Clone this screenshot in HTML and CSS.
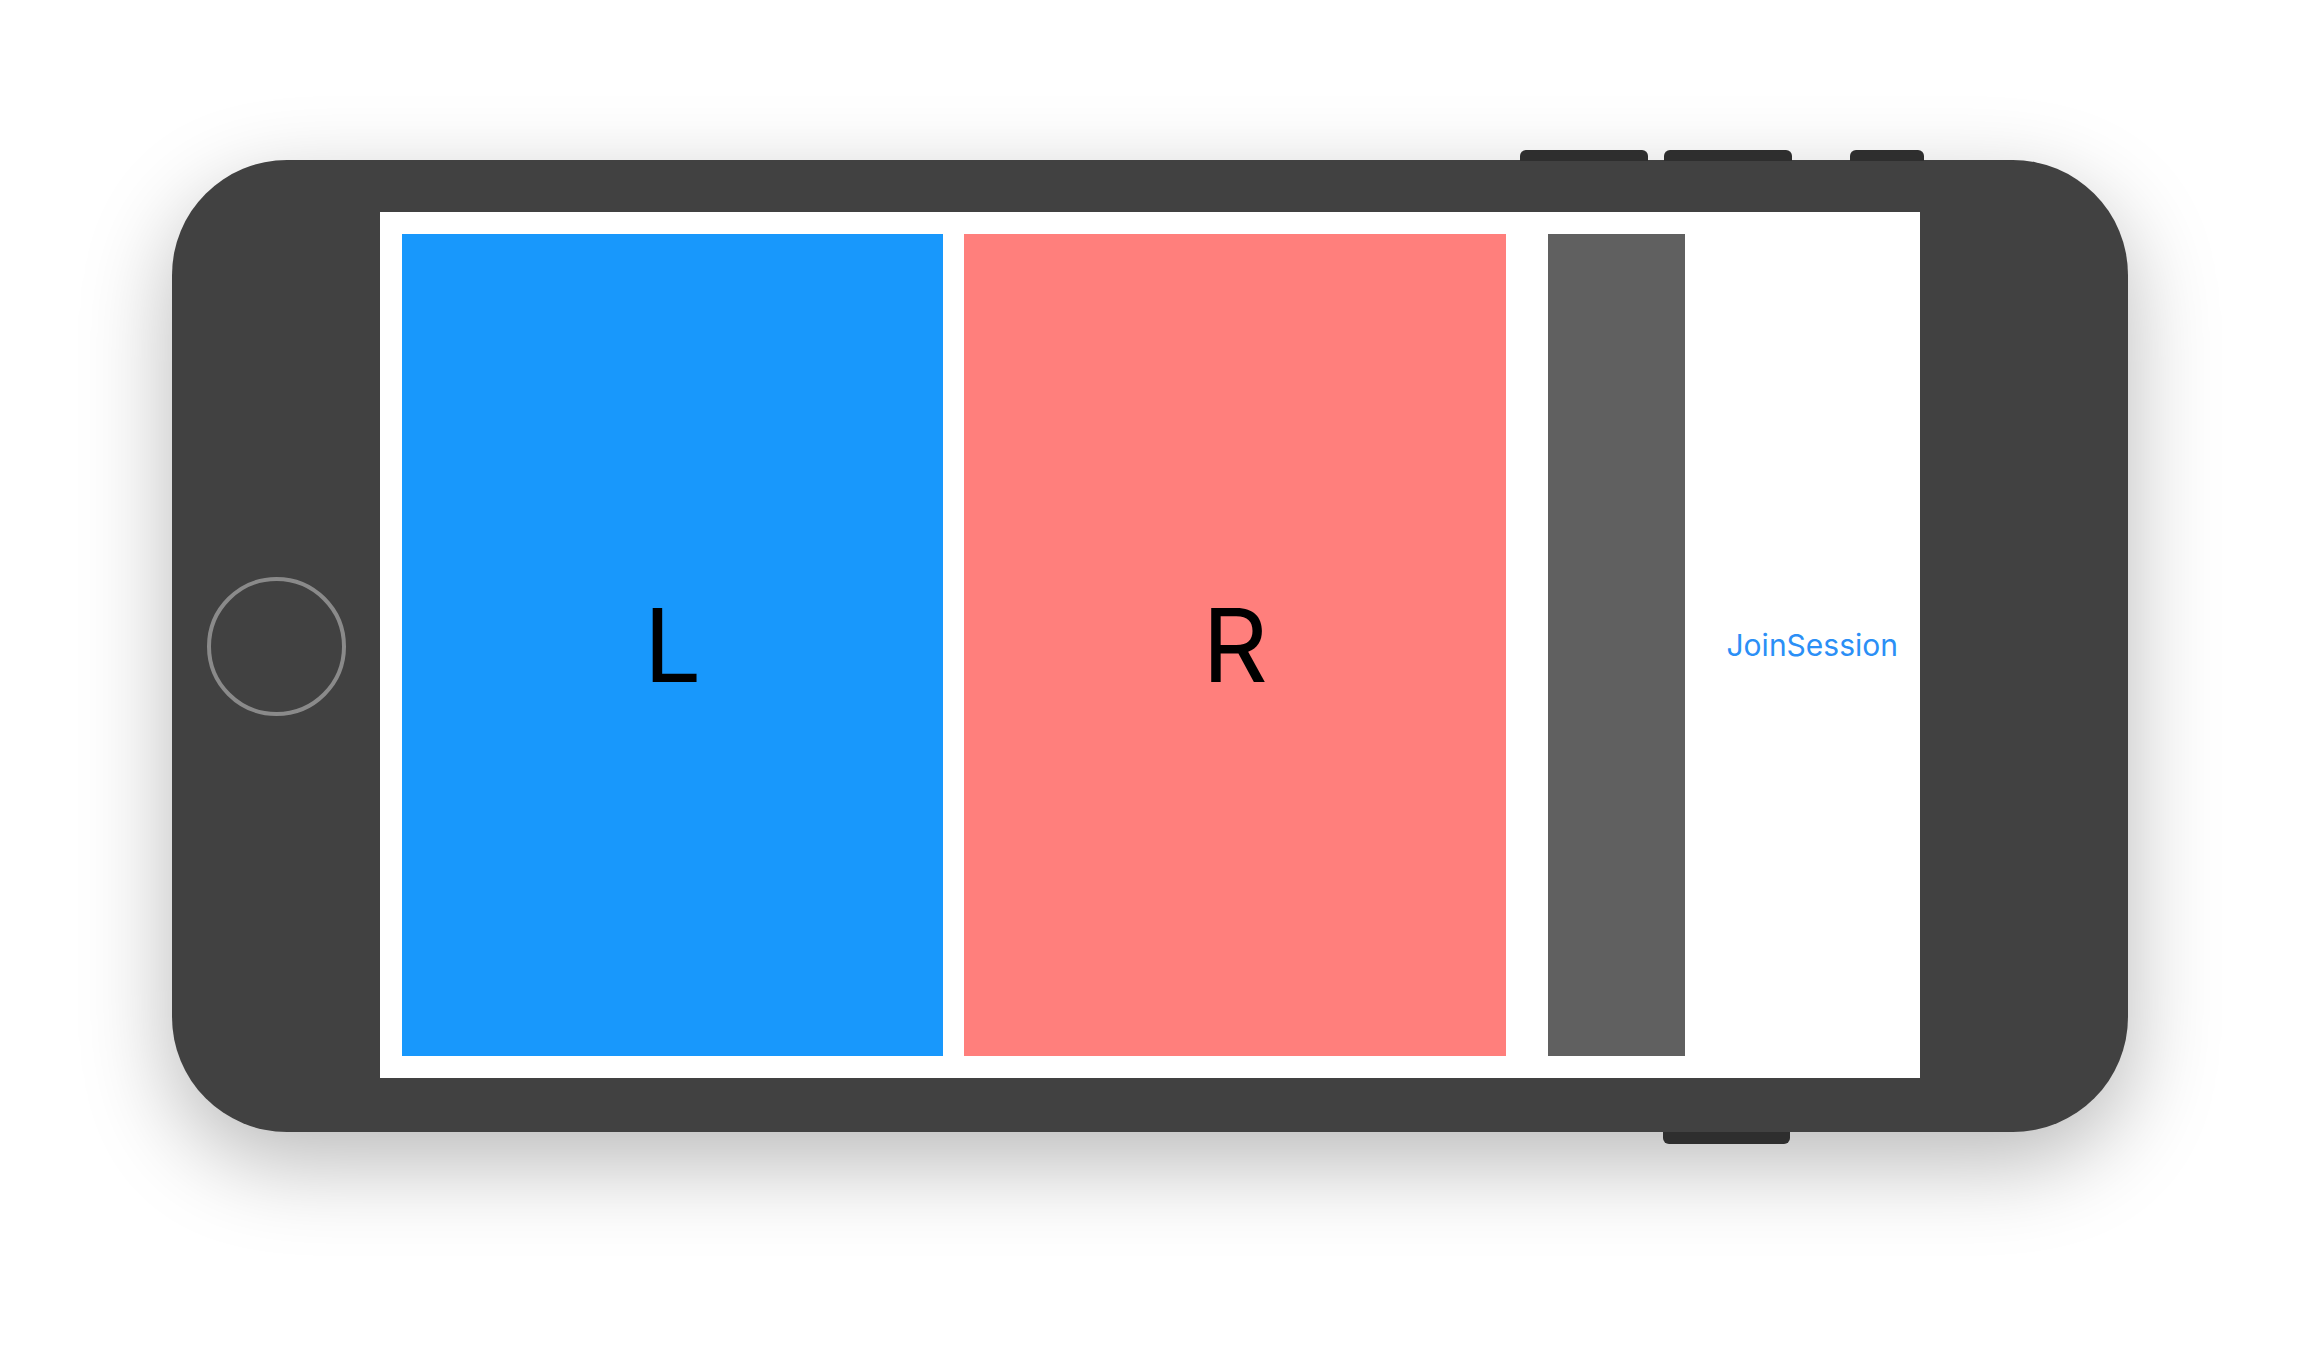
FILE: index.html
```html
<!DOCTYPE html>
<html lang="en">
<head>
    <meta charset="UTF-8">
    <title>Split Screen Preview</title>
    <link rel="stylesheet" href="styles.css">
</head>
<body>
    <div class="stage">
        <div class="phone">
            <span class="side-btn top vol-up"></span>
            <span class="side-btn top vol-down"></span>
            <span class="side-btn top power"></span>
            <span class="side-btn bottom mute"></span>

            <div class="bezel">
                <div class="home-btn"></div>
            </div>

            <div class="screen">
                <div class="pane pane-left">L</div>
                <div class="pane pane-right">R</div>
                <div class="divider"></div>
                <div class="actions">
                    <a href="#" class="join-link">JoinSession</a>
                </div>
            </div>

            <div class="bezel"></div>
        </div>
    </div>
</body>
</html>
```

FILE: styles.css
```css
body {
    margin: 0;
    padding: 0;
    background: #fff;
    font-family: Inter, Roboto, "Liberation Sans", sans-serif;
}

.stage {
    padding: 160px 172px;
}

.phone {
    position: relative;
    display: flex;
    width: 1956px;
    height: 972px;
    padding: 52px 0 54px;
    box-sizing: border-box;
    background-color: #414141;
    border-radius: 115px;
    box-shadow: 0 30px 90px rgba(0, 0, 0, 0.28);
}

/* hardware buttons sticking out of the frame */
.side-btn {
    position: absolute;
    height: 11px;
    background-color: #2e2e2e;
}

.side-btn.top {
    top: -10px;
    border-radius: 6px 6px 0 0;
}

.side-btn.bottom {
    bottom: -12px;
    border-radius: 0 0 6px 6px;
    height: 12px;
}

.vol-up { left: 1348px; width: 128px; }
.vol-down { left: 1492px; width: 128px; }
.power { left: 1678px; width: 74px; }
.mute { left: 1491px; width: 127px; }

.bezel {
    width: 208px;
    display: flex;
    align-items: center;
    justify-content: center;
}

.home-btn {
    width: 131px;
    height: 131px;
    border: 4px solid #8a8a8a;
    border-radius: 50%;
    margin-top: 2px;
}

.screen {
    width: 1540px;
    display: flex;
    align-items: stretch;
    padding: 22px;
    box-sizing: border-box;
    background-color: #fff;
}

.pane {
    display: flex;
    align-items: center;
    justify-content: center;
    font-size: 102px;
    color: #000;
}

.pane-left {
    width: 541px;
    background-color: #1898fc;
}

.pane-right {
    width: 542px;
    margin-left: 21px;
    background-color: #ff7f7c;
}

.divider {
    width: 137px;
    margin-left: 42px;
    background-color: #606060;
}

.actions {
    flex: 1;
    display: flex;
    align-items: center;
    justify-content: flex-end;
}

.join-link {
    color: #2b8ff6;
    font-size: 30px;
    text-decoration: none;
}
```
